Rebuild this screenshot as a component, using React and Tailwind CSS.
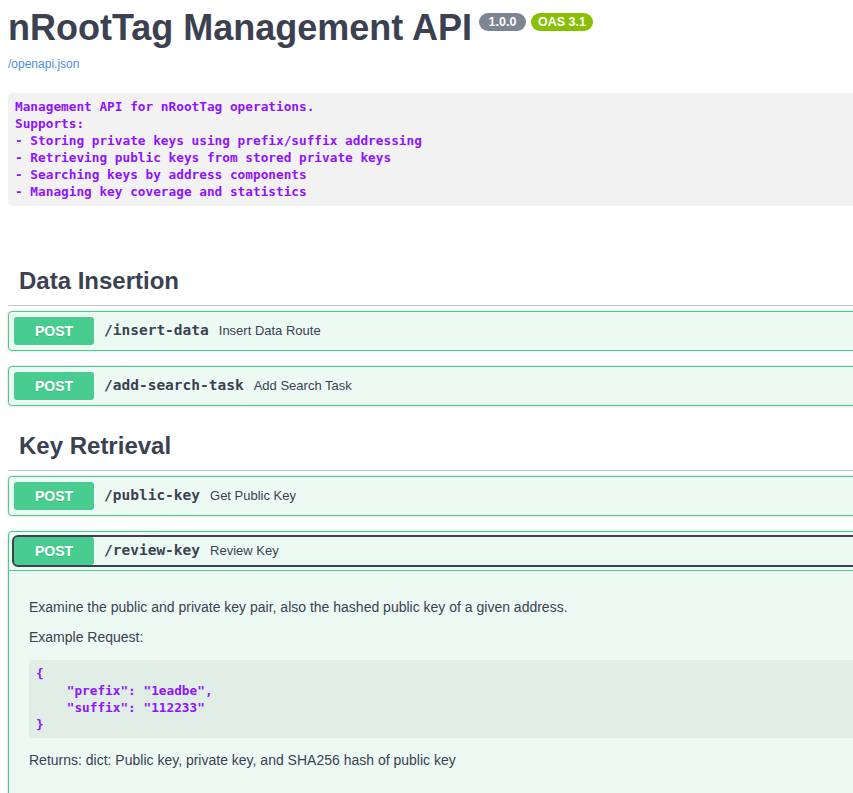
import React from "react";

const sans = { fontFamily: '"Liberation Sans", Arial, sans-serif' };

function Method() {
  return (
    <div className="flex h-[28px] w-[80px] shrink-0 items-center justify-center rounded-[3px] bg-[#49cc90] text-[14px] font-bold text-white [text-shadow:0_1px_0_rgba(0,0,0,0.1)]">
      POST
    </div>
  );
}

function SummaryInner({ path, desc }) {
  return (
    <>
      <Method />
      <span className="px-[10px] font-['DejaVu_Sans_Mono',monospace] text-[14.5px] font-bold text-[#3b4151]">
        {path}
      </span>
      <span className="text-[13px] text-[#3b4151]">{desc}</span>
    </>
  );
}

function OpBlock({ path, desc }) {
  return (
    <div className="mb-[15px] rounded-[4px] border border-[#49cc90] bg-[#edfaf4] shadow-[0_0_3px_rgba(0,0,0,0.19)]">
      <div className="flex items-center p-[5px]">
        <SummaryInner path={path} desc={desc} />
      </div>
    </div>
  );
}

function TagHeading({ children }) {
  return (
    <h3 className="mb-[5px] flex h-[50px] items-center border-b border-[#c4c6cb] pl-[11px] text-[24px] font-bold text-[#3b4151]">
      {children}
    </h3>
  );
}

export default function App() {
  return (
    <div className="h-[793px] w-[853px] overflow-hidden bg-white" style={sans}>
      <div className="w-[1100px] pl-[8px] pt-[7px]">
        <div className="flex items-start">
          <h2 className="text-[36px] leading-[42px] font-bold text-[#3b4151]">nRootTag Management API</h2>
          <div className="ml-[7px] mt-[6px] flex gap-[5px]">
            <span className="flex h-[18px] w-[47px] items-center justify-center rounded-full bg-[#7d8492] text-[12.5px] font-bold text-white">
              1.0.0
            </span>
            <span className="flex h-[18px] w-[62px] items-center justify-center rounded-full bg-[#89bf04] text-[12.5px] font-bold text-white">
              OAS 3.1
            </span>
          </div>
        </div>
        <div className="mt-[8px] text-[12px] leading-[14px] text-[#4990e2]">/openapi.json</div>

        <pre className="mt-[22px] rounded-[4px] bg-[#f2f2f2] px-[7px] pt-[5px] pb-[6px] font-['DejaVu_Sans_Mono',monospace] text-[12.75px] leading-[17px] font-bold text-[#9012fe]">
{`Management API for nRootTag operations.
Supports:
- Storing private keys using prefix/suffix addressing
- Retrieving public keys from stored private keys
- Searching keys by address components
- Managing key coverage and statistics`}
        </pre>

        <div className="mt-[50px]">
          <TagHeading>Data Insertion</TagHeading>
          <OpBlock path="/insert-data" desc="Insert Data Route" />
          <OpBlock path="/add-search-task" desc="Add Search Task" />
        </div>

        <div>
          <TagHeading>Key Retrieval</TagHeading>
          <OpBlock path="/public-key" desc="Get Public Key" />
          <div className="mb-[15px] rounded-[4px] border border-[#49cc90] bg-[#edfaf4] shadow-[0_0_3px_rgba(0,0,0,0.19)]">
            <div className="border-b border-[#49cc90] p-[5px]">
              <div className="flex items-center rounded-[4px] outline-2 outline-offset-[0px] outline-[#3b4151]">
                <SummaryInner path="/review-key" desc="Review Key" />
              </div>
            </div>
            <div className="px-[20px] pt-[26px] pb-[40px] text-[14px] leading-[20px] text-[#3b4151]">
              <p>Examine the public and private key pair, also the hashed public key of a given address.</p>
              <p className="mt-[10px]">Example Request:</p>
              <pre className="mt-[13px] rounded-[4px] bg-[#e1eee8] px-[7px] py-[5px] font-['DejaVu_Sans_Mono',monospace] text-[12.75px] leading-[17px] font-bold text-[#9012fe]">
{`{
    "prefix": "1eadbe",
    "suffix": "112233"
}`}
              </pre>
              <p className="mt-[12px]">Returns: dict: Public key, private key, and SHA256 hash of public key</p>
            </div>
          </div>
        </div>
      </div>
    </div>
  );
}
